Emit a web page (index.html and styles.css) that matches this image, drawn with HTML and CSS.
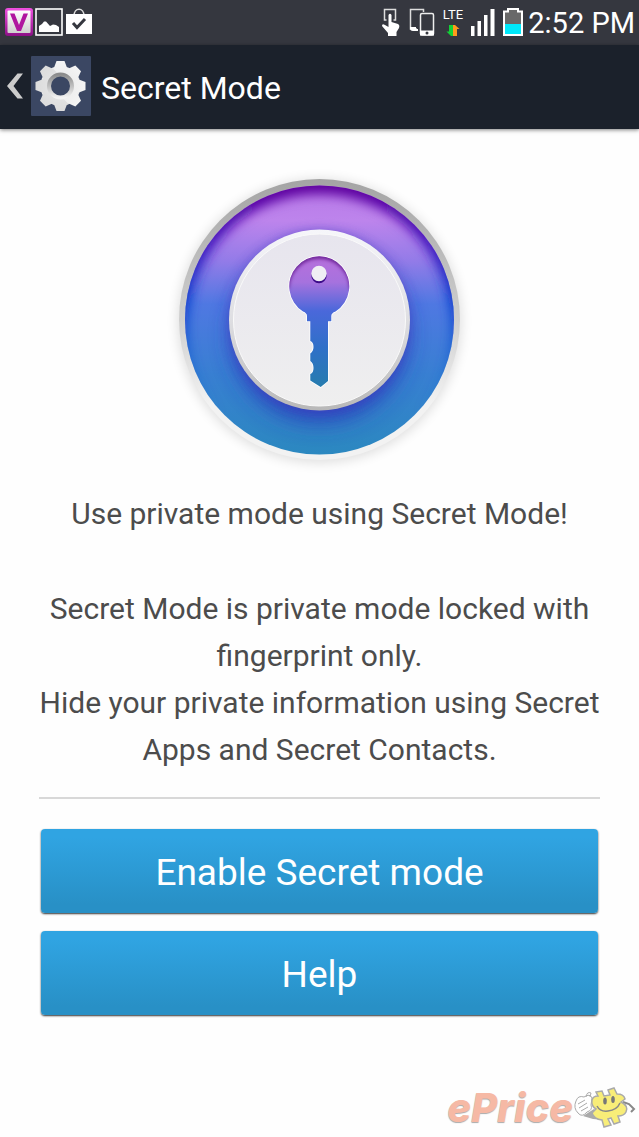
FILE: index.html
```
<!DOCTYPE html>
<html lang="en">
<head>
  <meta charset="UTF-8">
  <meta name="viewport" content="width=device-width, initial-scale=1">
  <title>Secret Mode</title>
  <link rel="stylesheet" href="styles.css">
</head>
<body>

  <!-- STATUS BAR -->
  <div class="status-bar">
    <div class="notifications">
      <svg width="28" height="28" viewBox="0 0 28 28">
        <defs>
          <linearGradient id="v-edge" x1="0" y1="0" x2="0" y2="1">
            <stop offset="0" stop-color="#f050e0"/>
            <stop offset="1" stop-color="#8c0f86"/>
          </linearGradient>
          <linearGradient id="v-face" x1="0" y1="0" x2="0" y2="1">
            <stop offset="0" stop-color="#ffffff"/>
            <stop offset="1" stop-color="#cfcfcf"/>
          </linearGradient>
        </defs>
        <rect width="28" height="28" rx="3" fill="url(#v-edge)"/>
        <rect x="2.500" y="2.500" width="23" height="22.500" rx="1" fill="url(#v-face)"/>
        <path d="M5 5.500 H9.500 L14 17 L18.500 5.500 H23 L16 23 H12 Z" fill="#b0169f"/>
      </svg>
      <svg width="28" height="28" viewBox="0 0 28 28">
        <rect x="1" y="1" width="26" height="26" fill="none" stroke="#fff" stroke-width="1.600"/>
        <path d="M4 24 V18 L7 16 L9 13.500 L11 13.500 L15 18 L18 16.500 L21 17 L24 19 V24 Z" fill="#fff"/>
      </svg>
      <svg width="28" height="28" viewBox="0 0 28 28">
        <path d="M9 8 C9 -1 19 -1 19 8" fill="none" stroke="#ddd" stroke-width="1.600"/>
        <path d="M1 6 H27 V26 H1 Z" fill="#fff"/>
        <path d="M8 15 L12 19.500 L20 11" fill="none" stroke="#35373f" stroke-width="3"/>
      </svg>
    </div>
    <div class="system">
      <svg width="20" height="30" viewBox="0 0 20 30">
        <path d="M5.500 13 H3.500 V2.500 H14.500 V13 H12.500" fill="none" stroke="#ddd" stroke-width="1.500"/>
        <path d="M7.500 8 Q9 5.500 10.500 8 V15 L17 17 Q19 18 18 21 L15.500 25 V29 H7 V26 L1 19 Q1 16 4 18 L7.500 20 Z" fill="#fff"/>
      </svg>
      <svg width="26" height="30" viewBox="0 0 26 30">
        <path d="M8 22 H1.500 V2.500 H14.500 V5" fill="none" stroke="#ddd" stroke-width="1.500"/>
        <path d="M1 20 H7 V22 H9 V24 H4 Q1 24 1 21 Z" fill="#fff"/>
        <rect x="11.500" y="6.500" width="13" height="21.500" rx="1.500" fill="none" stroke="#eee" stroke-width="1.500"/>
        <path d="M11 23.500 H25 V28.500 H11 Z" fill="#fff"/>
        <circle cx="18" cy="26" r="1.500" fill="#35373f"/>
      </svg>
      <div class="network">
        <span>LTE</span>
        <svg width="14" height="13" viewBox="0 0 14 13">
          <path d="M3 1 H7 V12 H5 L0.500 7.500 H3 Z" fill="#12d236"/>
          <path d="M7 12 V1 H9 L13.500 5 H11 V12 Z" fill="#ff9a1c"/>
        </svg>
      </div>
      <svg width="24" height="28" viewBox="0 0 24 28">
        <path d="M0 18 H3.500 V28 H0 Z M6.500 13 H10 V28 H6.500 Z M13 7 H16.500 V28 H13 Z M19.500 1 H23.500 V28 H19.500 Z" fill="#fff"/>
      </svg>
      <svg width="20" height="28" viewBox="0 0 20 28">
        <path d="M1 3.500 H5 V1 H15 V3.500 H19 V27 H1 Z" fill="#696969" stroke="#fff" stroke-width="2"/>
        <path d="M2 16 H18 V26 H2 Z" fill="#00e8fa"/>
      </svg>
      <span class="clock">2:52 PM</span>
    </div>
  </div>

  <!-- ACTION BAR -->
  <header class="action-bar">
    <button class="back" type="button" aria-label="Back">
      <svg width="18" height="26" viewBox="0 0 18 26">
        <path d="M17 0.500 H11.500 L1 13 L11.500 25.500 H17 L7.500 13 Z" fill="#ccc"/>
      </svg>
      <svg class="gear" width="60" height="60" viewBox="0 0 60 60">
        <defs>
          <linearGradient id="gear-face" gradientUnits="userSpaceOnUse" x1="0" y1="5" x2="0" y2="55">
            <stop offset="0" stop-color="#f4f4f4"/>
            <stop offset="1" stop-color="#dcdcdc"/>
          </linearGradient>
          <linearGradient id="gear-rim" x1="0" y1="0" x2="0" y2="1">
            <stop offset="0" stop-color="#8c8c8c"/>
            <stop offset="1" stop-color="#f2f2f2"/>
          </linearGradient>
        </defs>
        <g fill="url(#gear-face)">
          <circle cx="29.500" cy="30" r="20"/>
          <path id="tooth" d="M22.500 13 L25.500 5 H33.500 L36.500 13 V47 L33.500 55 H25.500 L22.500 47 Z"/>
          <use href="#tooth" transform="rotate(45 29.500 30)"/>
          <use href="#tooth" transform="rotate(90 29.500 30)"/>
          <use href="#tooth" transform="rotate(135 29.500 30)"/>
        </g>
        <circle cx="29.500" cy="30" r="11.500" fill="#3b4763" stroke="url(#gear-rim)" stroke-width="4"/>
      </svg>
    </button>
    <h1>Secret Mode</h1>
  </header>

  <main>
    <svg class="emblem" width="310" height="310" viewBox="0 0 310 310">
      <defs>
        <linearGradient id="bezel" x1="0" y1="0" x2="0" y2="1">
          <stop offset="0" stop-color="#a4a4a4"/>
          <stop offset="0.500" stop-color="#cfcfcf"/>
          <stop offset="0.800" stop-color="#f2f2f2"/>
          <stop offset="1" stop-color="#f2f2f2"/>
        </linearGradient>
        <linearGradient id="ring" x1="0" y1="0" x2="0" y2="1">
          <stop offset="0" stop-color="#b878e8"/>
          <stop offset="0.130" stop-color="#bd84ec"/>
          <stop offset="0.280" stop-color="#937be8"/>
          <stop offset="0.440" stop-color="#4f78e2"/>
          <stop offset="0.700" stop-color="#387fd2"/>
          <stop offset="1" stop-color="#2b88c0"/>
        </linearGradient>
        <linearGradient id="rim-shade" gradientUnits="userSpaceOnUse" x1="0" y1="20" x2="0" y2="250">
          <stop offset="0" stop-color="#5f009c"/>
          <stop offset="0.250" stop-color="#4214bc"/>
          <stop offset="0.500" stop-color="#0a3acc"/>
          <stop offset="1" stop-color="#0a60cc" stop-opacity="0"/>
        </linearGradient>
        <linearGradient id="disc-edge" x1="0" y1="0" x2="0" y2="1">
          <stop offset="0" stop-color="#f6f6fa"/>
          <stop offset="0.500" stop-color="#dedee2"/>
          <stop offset="1" stop-color="#b8b8b8"/>
        </linearGradient>
        <linearGradient id="disc" x1="0" y1="0" x2="0" y2="1">
          <stop offset="0" stop-color="#e7e5ee"/>
          <stop offset="1" stop-color="#efefef"/>
        </linearGradient>
        <linearGradient id="key" gradientUnits="userSpaceOnUse" x1="0" y1="91" x2="0" y2="222">
          <stop offset="0" stop-color="#b86fdc"/>
          <stop offset="0.200" stop-color="#a672de"/>
          <stop offset="0.420" stop-color="#4a68da"/>
          <stop offset="0.700" stop-color="#2f70c8"/>
          <stop offset="1" stop-color="#267cae"/>
        </linearGradient>
        <filter id="blur-12" x="-30%" y="-30%" width="160%" height="160%"><feGaussianBlur stdDeviation="12"/></filter>
        <filter id="blur-6" x="-30%" y="-30%" width="160%" height="160%"><feGaussianBlur stdDeviation="6"/></filter>
        <filter id="blur-2" x="-30%" y="-30%" width="160%" height="160%"><feGaussianBlur stdDeviation="2"/></filter>
        <clipPath id="ring-clip"><circle cx="154.500" cy="155" r="134.500"/></clipPath>
        <path id="key-shape" d="M142 156.300 V151 Q142 148 138 146.500 A30 30 0 1 1 170.500 146.500 Q166.300 148 166.300 151 V156.300 H163 V216 L155.700 222 L145.300 215.500 V209 Q148.500 208 148.500 203 Q148.500 198 145.300 196 V188.500 Q148.500 186 148.500 182 Q148.500 177 145.300 176 V156.300 Z"/>
        <clipPath id="key-clip"><use href="#key-shape"/></clipPath>
      </defs>

      <!-- outer ring -->
      <circle cx="154.500" cy="156" r="142" fill="#000" opacity="0.120" filter="url(#blur-6)"/>
      <circle cx="154.500" cy="154.500" r="140.500" fill="url(#bezel)"/>
      <circle cx="154.500" cy="155" r="134.500" fill="url(#ring)"/>
      <g clip-path="url(#ring-clip)">
        <circle cx="154.500" cy="161" r="144" fill="none" stroke="url(#rim-shade)" stroke-width="24" filter="url(#blur-6)"/>
        <circle cx="154.500" cy="170" r="86" fill="#2b38bc" opacity="0.900" filter="url(#blur-12)"/>
        <circle cx="154.500" cy="156" r="90" fill="#4a3ac0" opacity="0.600" filter="url(#blur-6)"/>
      </g>

      <!-- centre disc -->
      <circle cx="154.500" cy="155" r="90.500" fill="url(#disc-edge)"/>
      <circle cx="154.500" cy="155" r="86" fill="url(#disc)" stroke="#fafafa" stroke-width="1"/>

      <!-- key -->
      <use href="#key-shape" fill="url(#key)" stroke="#fff" stroke-width="1.500"/>
      <use href="#key-shape" fill="url(#key)"/>
      <g clip-path="url(#key-clip)">
        <circle cx="154.300" cy="124" r="33" fill="none" stroke="#4c0878" stroke-width="4" stroke-dasharray="104 104" stroke-dashoffset="104" filter="url(#blur-2)"/>
        <circle cx="154" cy="110.500" r="7.700" fill="#3a0a88"/>
      </g>
      <circle cx="154" cy="108.500" r="7.700" fill="#f0eef4"/>
    </svg>

    <div class="description">
      <p>Use private mode using Secret Mode!</p>
      <p>Secret Mode is private mode locked with fingerprint only.<br>Hide your private information using Secret Apps and Secret Contacts.</p>
    </div>

    <div class="actions">
      <button class="action" type="button">Enable Secret mode</button>
      <button class="action" type="button">Help</button>
    </div>
  </main>

  <footer class="watermark">
    <span>ePrice</span>
    <svg width="64" height="42" viewBox="0 0 64 42">
      <path d="M10 29 L21 22 L31 33 L20 32 Z" fill="#aaa"/>
      <path d="M3 14 Q5 8 11 10 Q17 6 19 11 L18 18 Q20 23 14 25 Q9 31 5 26 Q0 21 3 14 Z" fill="#fff" stroke="#aaa"/>
      <path d="M5 17 L12 13 M6 21 L14 16 M8 24 L15 20 M13 10 Q14 4 18 6 L17 10" fill="none" stroke="#aaa"/>
      <path d="M50 15 L56 17 L61 22 L58 25" fill="none" stroke="#888" stroke-width="2"/>
      <path d="M23 5 L29 4 L31 9 L37 8 L35 3 L41 1 L44 7 Q51 7 52 12 L48 15 Q56 19 53 25 Q51 29 45 29 L47 35 L41 37 L38 31 L35 32 L38 38 L31 40 L29 33 Q21 32 19 26 L23 22 Q18 19 19 13 Q20 9 25 9 Z" fill="#f8ed78" stroke="#aaa" stroke-width="1.500"/>
      <ellipse cx="32" cy="14" rx="1.800" ry="3.500" fill="#777"/>
      <ellipse cx="40" cy="12.500" rx="1.800" ry="3.500" fill="#777"/>
      <path d="M24 19 Q27 25 35 24 Q44 23 47 16" fill="none" stroke="#888" stroke-width="1.500"/>
    </svg>
  </footer>

</body>
</html>
```
FILE: styles.css
```
* {
  box-sizing: border-box;
}

body {
  margin: 0;
  min-height: 100vh;
  display: flex;
  flex-direction: column;
  background: #fefefe;
  font-family: Roboto, 'Liberation Sans', sans-serif;
  color: #4c4c4c;
}

button {
  border: 0;
  padding: 0;
  background: none;
  font-family: inherit;
  cursor: pointer;
}

svg {
  display: block;
  flex: none;
}

.status-bar {
  display: flex;
  justify-content: space-between;
  align-items: center;
  height: 45px;
  padding: 0 4px 1px 5px;
  background: #35373f;
  color: white;
}

.notifications {
  display: flex;
  gap: 2px;
}

.system {
  display: flex;
  align-items: center;
  gap: 8px;
}

.network {
  display: flex;
  flex-direction: column;
  align-items: center;
  gap: 2px;
  font-size: 13px;
  line-height: 14px;
}

.clock {
  padding-top: 2px;
  font-size: 29px;
  line-height: 42px;
  margin-left: -3px;
}

.action-bar {
  display: flex;
  align-items: center;
  gap: 10px;
  height: 84px;
  padding: 0 6px 2px;
  background: #1b212b;
  color: white;
  box-shadow: 0 1px 4px rgba(0, 0, 0, 0.5);
}

.back {
  display: flex;
  align-items: center;
  gap: 7px;
}

.gear {
  background: #3b4763;
  border-radius: 1px;
}

.action-bar h1 {
  margin: 0;
  padding-top: 4px;
  font-size: 32px;
  font-weight: 400;
}

main {
  padding: 36px 39px 0;
}

.emblem {
  margin: 0 auto;
}

.description {
  padding: 15px 0 24px;
  border-bottom: 2px solid #d8d8d8;
  font-size: 30px;
  line-height: 47px;
  text-align: center;
}

/* text runs a little wider than the divider */
.description p {
  margin: 0 -8px 48px;
}

.description p:last-child {
  margin-bottom: 0;
}

.actions {
  display: flex;
  flex-direction: column;
  gap: 18px;
  padding: 30px 2px;
}

.action {
  height: 84px;
  padding-top: 3px;
  border-radius: 4px;
  background: linear-gradient(#30a4e2 10%, #2890c6 90%);
  box-shadow: 0 1px 2px rgba(0, 0, 0, 0.8);
  color: white;
  font-size: 37px;
}

.watermark {
  display: flex;
  justify-content: flex-end;
  align-items: center;
  margin-top: auto;
  padding: 0 2px 8px;
}

.watermark span {
  font-family: Inter, 'Liberation Sans', sans-serif;
  font-size: 40px;
  font-weight: 800;
  font-style: italic;
  line-height: 42px;
  color: #f6b9a5;
  text-shadow: 0 1px 1px #aaa;
}
```
